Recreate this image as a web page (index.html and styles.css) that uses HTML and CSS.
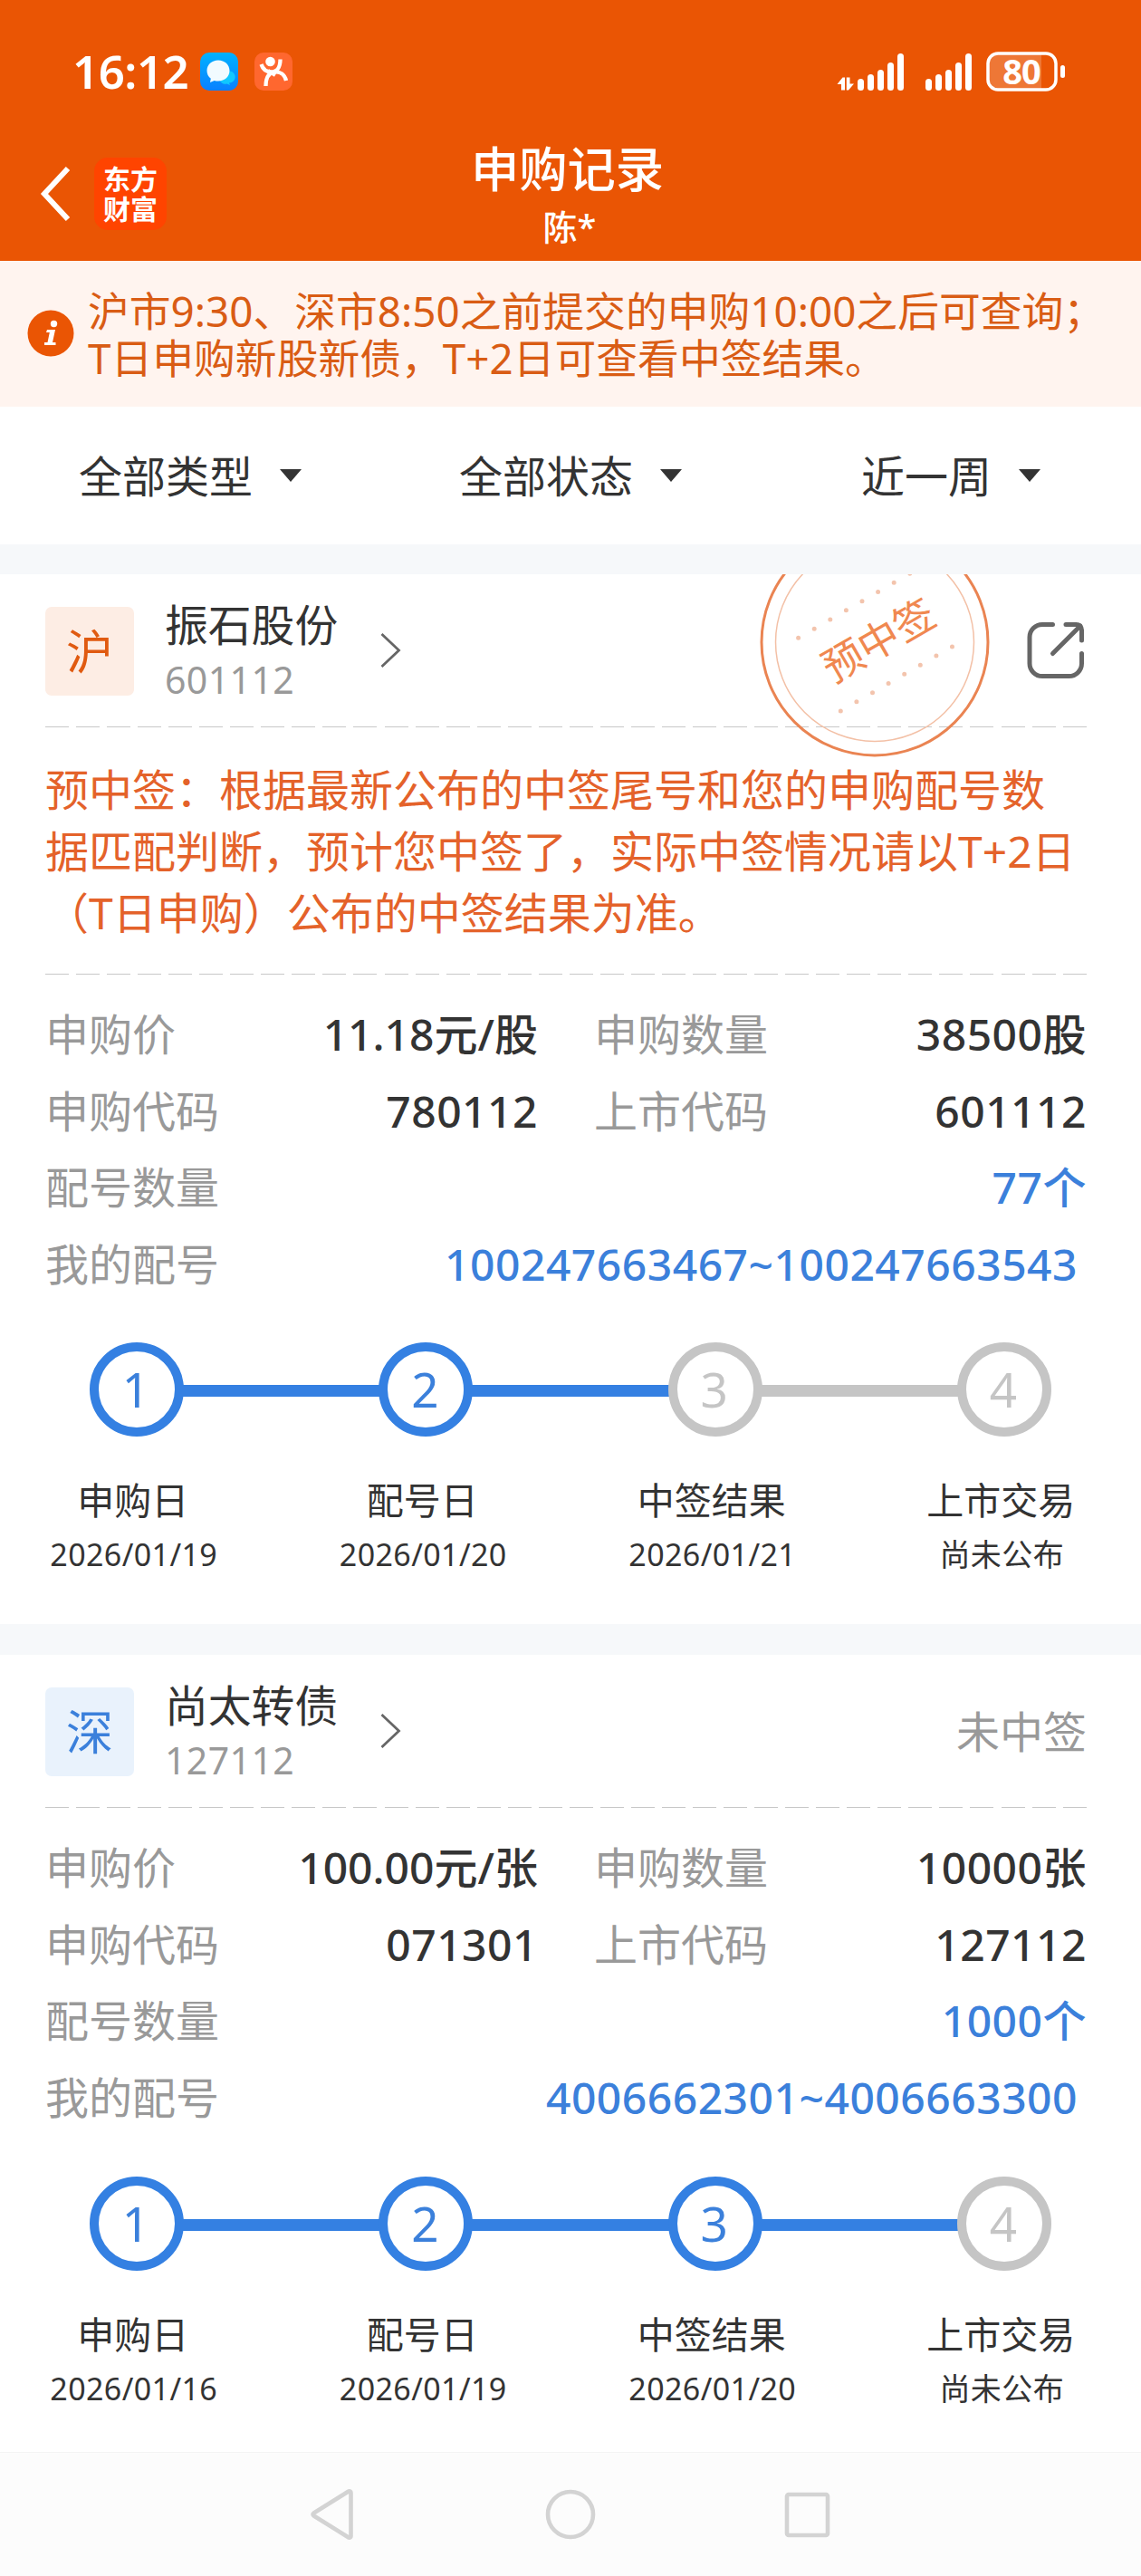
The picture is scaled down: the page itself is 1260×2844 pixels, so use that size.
FILE: index.html
```html
<!DOCTYPE html>
<html lang="zh-CN">
<head>
<meta charset="utf-8">
<title>申购记录</title>
<link rel="stylesheet" href="styles.css">
</head>

<body>
<div class="header">
  <div class="statusbar">
    <span class="time">16:12</span>
    <svg class="app-ico" width="42" height="42" viewBox="0 0 42 42">
      <defs>
        <linearGradient id="msg" x1="0" y1="0" x2="0" y2="1">
          <stop offset="0" stop-color="#00b2ff"/>
          <stop offset="1" stop-color="#0a80ff"/>
        </linearGradient>
      </defs>
      <rect width="42" height="42" rx="10" fill="url(#msg)"/>
      <path d="M28 22a6.500 6.500 0 1 1 4 11.500l1 2.500-3.500-1.500A6.500 6.500 0 0 1 22 31z" fill="#10c8ff"/>
      <path d="M20 8.500c7.200 0 12.500 5 12.500 11.500S27.200 31.500 20 31.500c-1.500 0-3-.2-4.300-.6L11 33l.8-4.200C9 26.700 7.500 23.500 7.500 20 7.500 13.500 12.800 8.500 20 8.500z" fill="#f1fbff"/>
    </svg>
    <svg class="app-ico" width="42" height="42" viewBox="0 0 42 42">
      <rect width="42" height="42" rx="10" fill="#ff672f"/>
      <circle cx="17.500" cy="10" r="5.300" fill="#fff"/>
      <g fill="none" stroke="#fff" stroke-width="4.300">
        <path d="M7.500 13c2 6 6 8.500 11 8.500 6 0 10-5 10-14"/>
        <path d="M12.500 37c0-8 2-14 9-15.500 7-1 12 3 13.500 9.500"/>
        <path d="M15 20l8 5"/>
      </g>
    </svg>
    <svg class="signals" width="256" height="50" viewBox="922 53 256 50">
      <g fill="#fff">
        <path d="M924.500 92l6-7.500h2.500V98.500h-4V92z"/>
        <path d="M943 91.500l-6 7h-2.200V84.500h3.700V91.500z"/>
        <rect x="947" y="86" width="7" height="13" rx="3.500"/>
        <rect x="958" y="81" width="7" height="18" rx="3.500"/>
        <rect x="969" y="76" width="7" height="23" rx="3.500"/>
        <rect x="980" y="68" width="7" height="31" rx="3.500"/>
        <rect x="991" y="58" width="7" height="41" rx="3.500"/>
        <rect x="1022" y="86" width="7" height="13" rx="3.500"/>
        <rect x="1033" y="81" width="7" height="18" rx="3.500"/>
        <rect x="1044" y="76" width="7" height="23" rx="3.500"/>
        <rect x="1055" y="68" width="7" height="31" rx="3.500"/>
        <rect x="1066" y="58" width="7" height="41" rx="3.500"/>
        <rect x="1171" y="71" width="5" height="14" rx="2.500"/>
        <path d="M1101 59h49v38h-49a9 9 0 0 1-9-9V68a9 9 0 0 1 9-9z" opacity=".2"/>
      </g>
      <rect x="1091" y="58" width="75" height="40" rx="11" fill="none" stroke="#fff" stroke-width="3.500"/>
      <text class="battery" x="1128" y="92" text-anchor="middle">80</text>
    </svg>
  </div>
  <div class="titlebar">
    <div class="nav-left">
      <svg width="36" height="72" viewBox="0 0 36 72">
        <path d="M32 8L6 36l26 28" fill="none" stroke="#fff" stroke-width="6"/>
      </svg>
      <div class="logo">东方<br>财富</div>
    </div>
    <div class="title">
      <h1>申购记录</h1>
      <p>陈*</p>
    </div>
  </div>
</div>

<div class="notice">
  <svg width="52" height="52" viewBox="0 0 52 52">
    <circle cx="26" cy="26" r="25.500" fill="#ea5504"/>
    <circle cx="29.500" cy="15.500" r="3.700" fill="#fff"/>
    <path d="M22 22h9l-3 14h3.500v3H19v-3h3.500l2.300-11H21z" fill="#fff"/>
  </svg>
  <p>沪市9:30、深市8:50之前提交的申购10:00之后可查询；<br>T日申购新股新债，T+2日可查看中签结果。</p>
</div>

<div class="filters">
  <div class="filter">全部类型<i></i></div>
  <div class="filter">全部状态<i></i></div>
  <div class="filter">近一周<i></i></div>
</div>

<div class="card">
  <svg class="stamp" width="254" height="254" viewBox="0 0 254 254">
    <circle cx="127" cy="127" r="125" fill="none" stroke="#ea8452" stroke-width="3"/>
    <circle cx="127" cy="127" r="109.500" fill="none" stroke="#f3c0a6" stroke-width="1.500"/>
    <g fill="none" stroke="#f3c4ad" stroke-width="5" stroke-linecap="round" stroke-dasharray="0 20.320">
      <path d="M42.600 122.300L167 50.500"/>
      <path d="M89.300 203L213.500 131.300"/>
    </g>
    <text class="stamp-text" transform="translate(131 124.500) rotate(-30)" y="17" text-anchor="middle">预中签</text>
  </svg>
  <div class="card-head">
    <div class="market sh">沪</div>
    <div class="stock">
      <h2>振石股份</h2>
      <p>601112</p>
    </div>
    <svg class="arrow" width="24" height="40" viewBox="0 0 24 40">
      <path d="M1.500 2L20.500 20 1.500 38" fill="none" stroke="#666" stroke-width="2.800"/>
    </svg>
    <svg class="share" width="64" height="64" viewBox="0 0 64 64">
      <g fill="none" stroke="#666" stroke-width="5" stroke-linecap="round" stroke-linejoin="round">
        <path d="M28.500 3.500H17A14 14 0 0 0 3 17.500v29a14 14 0 0 0 14 14h29.500a14 14 0 0 0 14-14V35.500"/>
        <path d="M43 3.500h11.500a6 6 0 0 1 6 6V21"/>
        <path d="M28.500 35.500L59 5"/>
      </g>
    </svg>
  </div>
  <div class="dash"></div>
  <p class="desc">预中签：根据最新公布的中签尾号和您的申购配号数<br>据匹配判断，预计您中签了，实际中签情况请以T+2日<br>（T日申购）公布的中签结果为准。</p>
  <div class="dash"></div>
  <div class="info">
    <div class="row">
      <span class="label">申购价</span><span class="value price">11.18元/股</span>
      <span class="label second">申购数量</span><span class="value">38500股</span>
    </div>
    <div class="row">
      <span class="label">申购代码</span><span class="value">780112</span>
      <span class="label second">上市代码</span><span class="value">601112</span>
    </div>
    <div class="row">
      <span class="label">配号数量</span><span class="value blue">77个</span>
    </div>
    <div class="row">
      <span class="label">我的配号</span><span class="value blue numbers">100247663467~100247663543</span>
    </div>
  </div>
  <div class="steps">
    <b class="done">1</b><i class="done"></i><b class="done">2</b><i class="done"></i><b>3</b><i></i><b>4</b>
  </div>
  <div class="step-text">
    <div>申购日<small>2026/01/19</small></div>
    <div>配号日<small>2026/01/20</small></div>
    <div>中签结果<small>2026/01/21</small></div>
    <div>上市交易<small>尚未公布</small></div>
  </div>
</div>

<div class="card last">
  <div class="card-head">
    <div class="market sz">深</div>
    <div class="stock">
      <h2>尚太转债</h2>
      <p>127112</p>
    </div>
    <svg class="arrow" width="24" height="40" viewBox="0 0 24 40">
      <path d="M1.500 2L20.500 20 1.500 38" fill="none" stroke="#666" stroke-width="2.800"/>
    </svg>
    <span class="result">未中签</span>
  </div>
  <div class="dash"></div>
  <div class="info">
    <div class="row">
      <span class="label">申购价</span><span class="value price">100.00元/张</span>
      <span class="label second">申购数量</span><span class="value">10000张</span>
    </div>
    <div class="row">
      <span class="label">申购代码</span><span class="value">071301</span>
      <span class="label second">上市代码</span><span class="value">127112</span>
    </div>
    <div class="row">
      <span class="label">配号数量</span><span class="value blue">1000个</span>
    </div>
    <div class="row">
      <span class="label">我的配号</span><span class="value blue numbers">4006662301~4006663300</span>
    </div>
  </div>
  <div class="steps">
    <b class="done">1</b><i class="done"></i><b class="done">2</b><i class="done"></i><b class="done">3</b><i class="done"></i><b>4</b>
  </div>
  <div class="step-text">
    <div>申购日<small>2026/01/16</small></div>
    <div>配号日<small>2026/01/19</small></div>
    <div>中签结果<small>2026/01/20</small></div>
    <div>上市交易<small>尚未公布</small></div>
  </div>
</div>

<!-- android navigation keys -->
<div class="navkeys">
  <svg width="60" height="60" viewBox="0 0 60 60">
    <path d="M7.500 28.500L46 4.500Q48.500 4 48.500 6V54q0 2-2.500 1.500L7.500 31.500Q5.500 30 7.500 28.500z"/>
  </svg>
  <svg width="60" height="60" viewBox="0 0 60 60">
    <circle cx="30" cy="30" r="25"/>
  </svg>
  <svg width="60" height="60" viewBox="0 0 60 60">
    <rect x="8" y="8" width="45" height="45" rx="2"/>
  </svg>
</div>
</body>
</html>
```
FILE: styles.css
```css
*
{
  box-sizing: border-box;
}

body
{
  margin: 0;
  width: 1260px;
  background-color: #fff;
  color: #333;
  font-family: "Noto Sans", "Noto Sans CJK SC", sans-serif;
  font-size: 48px;
}

h1, h2, p
{
  margin: 0;
  font-weight: 400;
}

svg
{
  display: block;
  flex: none;
  overflow: visible;
}

/* header */
.header
{
  height: 288px;
  background-color: #ea5504;
  color: #fff;
}

.statusbar
{
  display: flex;
  align-items: center;
  height: 158px;
  padding: 0 82px 0 80px;
}

.time
{
  width: 141px;
  padding-bottom: 3px;
  font-size: 51px;
  font-weight: 600;
  letter-spacing: -0.5px;
}

.app-ico
{
  margin-right: 18px;
}

.signals
{
  margin-left: auto;
}

.battery
{
  font-size: 38px;
  font-weight: 700;
  letter-spacing: -1px;
  fill: #fff;
}

.titlebar
{
  display: grid;
  grid-template-columns: 400px 1fr 400px;
  height: 130px;
}

.nav-left
{
  display: flex;
  align-items: center;
  height: 112px;
  padding-left: 43px;
}

.logo
{
  width: 80px;
  height: 80px;
  margin-left: 25px;
  padding-top: 7px;
  border-radius: 15px;
  background-color: #ff4400;
  font-size: 30px;
  font-weight: 700;
  line-height: 33px;
  text-align: center;
}

.title
{
  text-align: center;
}

.title h1
{
  padding-right: 7px;
  font-size: 53.3px;
  font-weight: 500;
  line-height: 58px;
}

.title p
{
  padding-right: 2px;
  font-size: 38px;
  font-weight: 500;
  line-height: 69px;
}

/* notice */
.notice
{
  display: flex;
  height: 161px;
  padding: 29px 0 0 30px;
  background-color: #fff4ef;
  color: #d95c14;
  font-size: 45.8px;
  line-height: 52px;
  white-space: nowrap;
}

.notice svg
{
  margin: 25px 15px 0 0;
}

/* filters */
.filters
{
  display: flex;
  height: 152px;
}

.filter
{
  display: flex;
  flex: 1;
  align-items: center;
  justify-content: center;
  padding-bottom: 5px;
}

.filter i
{
  margin: 5px 0 0 30px;
  border: 12px solid transparent;
  border-top: 14px solid #333;
  border-bottom: 0;
}

/* record cards */
.card
{
  position: relative;
  overflow: hidden;
  height: 1192px;
  border-top: 33px solid #f6f8fa;
  padding: 0 60px 0 50px;
}

.last
{
  height: 914px;
  border-top-width: 34px;
}

.card-head
{
  display: flex;
  align-items: center;
  height: 168px;
}

.market
{
  width: 98px;
  height: 98px;
  margin-top: 1px;
  border-radius: 7px;
  font-size: 52px;
  line-height: 97px;
  text-align: center;
}

.sh
{
  background-color: #fdede4;
  color: #e05a10;
}

.sz
{
  background-color: #e9f2fc;
  color: #3b80db;
}

.stock
{
  width: 238px;
  margin-left: 34px;
  padding-top: 4px;
}

.stock h2
{
  font-size: 47.8px;
  line-height: 60px;
}

.stock p
{
  color: #999;
  font-size: 41px;
  line-height: 60px;
  letter-spacing: 0.4px;
}

.share
{
  margin: 0 2px 0 auto;
}

.result
{
  margin: 0 0 4px auto;
  color: #999;
}

.stamp
{
  position: absolute;
  left: 839px;
  top: -52px;
}

.stamp-text
{
  font-size: 45px;
  fill: #f08850;
}

.dash
{
  height: 1px;
  background-image: repeating-linear-gradient(90deg, #c8c8c8 0 26px, transparent 26px 34.05px);
}

.desc
{
  height: 272px;
  padding-top: 35px;
  color: #e4622a;
  line-height: 68px;
  white-space: nowrap;
}

.info
{
  padding-top: 24px;
}

.row
{
  display: flex;
  height: 84.5px;
  line-height: 83px;
}

.label
{
  width: 192px;
  color: #999;
}

.second
{
  margin-left: 62px;
}

.value
{
  flex: 1;
  font-weight: 500;
  letter-spacing: 0.5px;
  text-align: right;
}

.price
{
  letter-spacing: 0;
}

.blue
{
  color: #3b80db;
}

.numbers
{
  padding-right: 10px;
}

/* progress */
.steps
{
  display: flex;
  align-items: center;
  margin: 44px 39px 0 49px;
}

.last .steps
{
  margin-top: 45px;
}

.steps b
{
  width: 104px;
  height: 104px;
  padding-right: 2px;
  border: 10px solid #c5c5c5;
  border-radius: 50%;
  color: #c5c5c5;
  font-size: 53px;
  font-weight: 400;
  line-height: 84px;
  text-align: center;
}

.steps i
{
  flex: 1;
  height: 13px;
  margin: 3px -2px 0;
  background-color: #c5c5c5;
}

.steps b.done
{
  border-color: #3480e2;
  color: #3b80db;
}

.steps i.done
{
  background-color: #3480e2;
}

.step-text
{
  display: grid;
  grid-template-columns: repeat(4, 319.5px);
  margin: 40px 0 0 -63px;
  font-size: 41px;
  line-height: 60px;
  text-align: center;
}

.step-text small
{
  display: block;
  padding-left: 2px;
  font-size: 34px;
  letter-spacing: 0.4px;
}

/* bottom keys */
.navkeys
{
  display: flex;
  justify-content: center;
  gap: 201px;
  height: 137px;
  padding-top: 38px;
  border-top: 1px solid #f4f4f4;
  background-color: #fcfcfc;
}

.navkeys svg
{
  fill: none;
  stroke: #d3d3d3;
  stroke-width: 4.6px;
}
```
